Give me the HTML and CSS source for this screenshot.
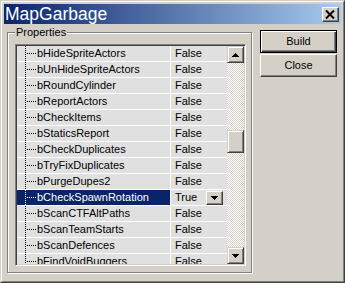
FILE: index.html
```html
<!DOCTYPE html>
<html>
<head>
<meta charset="utf-8">
<link rel="stylesheet" href="styles.css">
</head>
<body>
<div class="window">
  <div class="frame">
    <div class="titlebar">
      <span class="title">MapGarbage</span>
      <div class="close-btn">
        <svg width="10" height="9" viewBox="0 0 10 9"><path d="M1 0.5L9 8.5M9 0.5L1 8.5" stroke="#000" stroke-width="2"/></svg>
      </div>
    </div>
    <div class="client">
      <div class="group">
        <span class="group-label">Properties</span>
        <div class="list">
          <div class="rows">
            <div class="row"><div class="name">bHideSpriteActors</div><div class="value">False</div></div>
            <div class="row"><div class="name">bUnHideSpriteActors</div><div class="value">False</div></div>
            <div class="row"><div class="name">bRoundCylinder</div><div class="value">False</div></div>
            <div class="row"><div class="name">bReportActors</div><div class="value">False</div></div>
            <div class="row"><div class="name">bCheckItems</div><div class="value">False</div></div>
            <div class="row"><div class="name">bStaticsReport</div><div class="value">False</div></div>
            <div class="row"><div class="name">bCheckDuplicates</div><div class="value">False</div></div>
            <div class="row"><div class="name">bTryFixDuplicates</div><div class="value">False</div></div>
            <div class="row"><div class="name">bPurgeDupes2</div><div class="value">False</div></div>
            <div class="row selected"><div class="name">bCheckSpawnRotation</div><div class="value"><span>True</span><span class="dd-btn"><svg width="7" height="4" viewBox="0 0 7 4"><path d="M0 0h7v1h-1v1h-1v1h-1v1h-1v-1h-1v-1h-1v-1h-1z"/></svg></span></div></div>
            <div class="row"><div class="name">bScanCTFAltPaths</div><div class="value">False</div></div>
            <div class="row"><div class="name">bScanTeamStarts</div><div class="value">False</div></div>
            <div class="row"><div class="name">bScanDefences</div><div class="value">False</div></div>
            <div class="row"><div class="name">bFindVoidBuggers</div><div class="value">False</div></div>
          </div>
          <div class="scrollbar">
            <div class="sb-btn"><svg width="7" height="4" viewBox="0 0 7 4"><path d="M3 0h1v1h1v1h1v1h1v1h-7v-1h1v-1h1v-1h1z"/></svg></div>
            <div class="sb-track track-top"></div>
            <div class="sb-thumb"></div>
            <div class="sb-track track-bottom"></div>
            <div class="sb-btn"><svg width="7" height="4" viewBox="0 0 7 4"><path d="M0 0h7v1h-1v1h-1v1h-1v1h-1v-1h-1v-1h-1v-1h-1z"/></svg></div>
          </div>
        </div>
      </div>
      <div class="buttons">
        <div class="btn default"><span class="btn-face">Build</span></div>
        <div class="btn"><span class="btn-face">Close</span></div>
      </div>
    </div>
  </div>
</div>
</body>
</html>
```

FILE: styles.css
```css
* { box-sizing: border-box; }
html, body { margin: 0; padding: 0; background: #d4d0c8; }
body { font-family: "Liberation Sans", Arial, sans-serif; font-size: 11px; color: #000; }

.window {
  width: 345px;
  height: 283px;
  border: 1px solid;
  border-color: #d4d0c8 #404040 #404040 #d4d0c8;
  background: #d4d0c8;
}
.frame {
  height: 100%;
  border: 1px solid;
  border-color: #fff #808080 #808080 #fff;
  padding: 2px;
  display: flex;
  flex-direction: column;
}

.titlebar {
  height: 20px;
  flex: none;
  display: flex;
  align-items: center;
  background: linear-gradient(to right, #0a246a, #a6caf0);
  padding-left: 1px;
}
.title {
  color: #fff;
  font-size: 17.5px;
  line-height: 20px;
}
.close-btn {
  margin-left: auto;
  margin-right: 2px;
  width: 17px;
  height: 15px;
  background: #d4d0c8;
  border: 1px solid;
  border-color: #fff #404040 #404040 #fff;
  box-shadow: inset -1px -1px 0 #808080;
  display: flex;
  align-items: center;
  justify-content: center;
  padding-right: 1px;
}
.close-btn svg { display: block; }

.client {
  flex: 1;
  display: flex;
  align-items: flex-start;
  padding: 6px 0 0 3px;
}

.group {
  position: relative;
  margin-top: 2px;
  width: 245px;
  height: 241px;
  border: 1px solid #808080;
  box-shadow: 1px 1px 0 #fff, inset 1px 1px 0 #fff;
  padding: 11px 5px 6px 7px;
}
.group-label {
  position: absolute;
  top: -7px;
  left: 7px;
  padding: 0 1px;
  background: #d4d0c8;
  line-height: 13px;
}

.list {
  width: 231px;
  height: 222px;
  border: 1px solid;
  border-color: #808080 #fff #fff #808080;
  box-shadow: inset 1px 1px 0 #404040, inset -1px -1px 0 #d4d0c8;
  padding: 1px;
  display: flex;
  overflow: hidden;
}

.rows {
  flex: 1;
  background: #fff;
  display: flex;
  flex-direction: column;
  gap: 1px;
  overflow: hidden;
}
.row {
  flex: none;
  height: 15px;
  display: grid;
  grid-template-columns: 153px 1fr;
  column-gap: 1px;
  line-height: 15px;
}
.name {
  background-color: #e0e0e0;
  padding-left: 20px;
  white-space: nowrap;
  overflow: hidden;
  background-image:
    repeating-linear-gradient(to bottom, #000 0 1px, transparent 1px 2px),
    repeating-linear-gradient(to right, #000 0 1px, transparent 1px 2px);
  background-size: 1px 16px, 9px 1px;
  background-position: 8px 0, 10px 7px;
  background-repeat: no-repeat;
}
.value {
  background: #e0e0e0;
  padding-left: 4px;
  white-space: nowrap;
}
.row.selected .name {
  background-color: #0a246a;
  color: #fff;
  background-image:
    repeating-linear-gradient(to bottom, #fff 0 1px, transparent 1px 2px),
    repeating-linear-gradient(to right, #fff 0 1px, transparent 1px 2px);
}
.row.selected .value {
  display: flex;
  align-items: center;
  justify-content: space-between;
  padding-right: 4px;
}
.dd-btn {
  width: 17px;
  height: 14px;
  background: #d4d0c8;
  border: 1px solid;
  border-color: #fff #404040 #404040 #fff;
  box-shadow: inset -1px -1px 0 #808080;
  display: flex;
  align-items: center;
  justify-content: center;
}
.dd-btn svg, .sb-btn svg { display: block; }

.scrollbar {
  width: 17px;
  flex: none;
  display: flex;
  flex-direction: column;
}
.sb-btn, .sb-thumb {
  flex: none;
  background: #d4d0c8;
  border: 1px solid;
  border-color: #d4d0c8 #404040 #404040 #d4d0c8;
  box-shadow: inset 1px 1px 0 #fff, inset -1px -1px 0 #808080;
}
.sb-btn {
  height: 17px;
  display: flex;
  align-items: center;
  justify-content: center;
}
.sb-thumb { height: 23px; }
.sb-track {
  background: repeating-conic-gradient(#fff 0 25%, #d4d0c8 0 50%) 0 0 / 2px 2px;
}
.track-top { height: 67px; flex: none; }
.track-bottom { flex: 1; }

.buttons {
  margin-left: 8px;
  display: flex;
  flex-direction: column;
  gap: 1px;
}
.btn {
  width: 77px;
  height: 23px;
  background: #d4d0c8;
  border: 1px solid;
  border-color: #fff #404040 #404040 #fff;
  box-shadow: inset -1px -1px 0 #808080;
  display: flex;
  align-items: center;
  justify-content: center;
}
.btn.default {
  border-color: #000;
  box-shadow: inset 1px 1px 0 #fff, inset -1px -1px 0 #404040, inset -2px -2px 0 #808080;
}
.btn-face { line-height: 13px; }
```
